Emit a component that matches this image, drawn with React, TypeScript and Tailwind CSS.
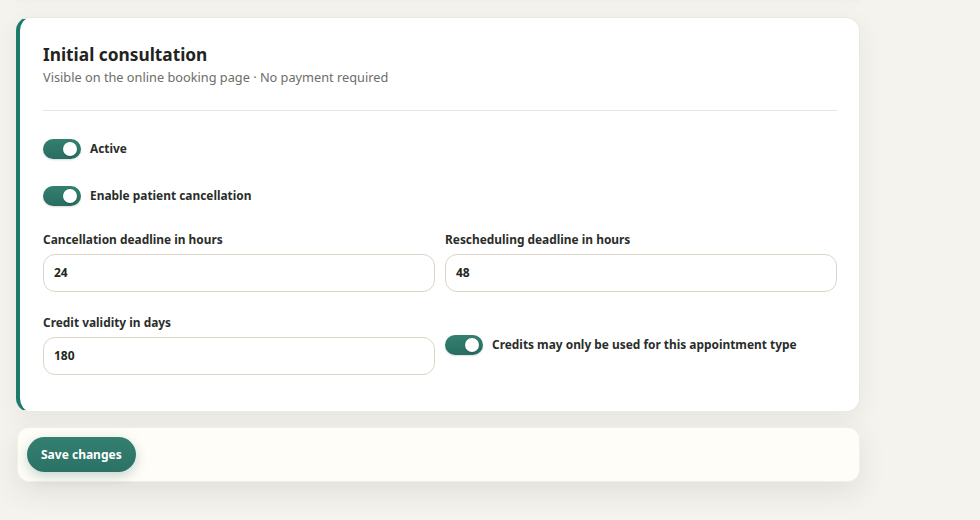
import React from "react";

function Toggle({ on = true }: { on?: boolean }) {
  return (
    <span
      className={`relative inline-flex h-5 w-[38px] shrink-0 items-center rounded-full shadow-[0_1px_2px_rgba(0,0,0,0.15)] ${
        on ? "bg-gradient-to-b from-[#34806f] to-[#286d61]" : "bg-[#d6d3cb]"
      }`}
    >
      <span
        className={`absolute top-[3px] h-[14px] w-[14px] rounded-full bg-white shadow-[0_1px_2px_rgba(0,0,0,0.2)] ${
          on ? "right-[4px]" : "left-[4px]"
        }`}
      />
    </span>
  );
}

function ToggleRow({ label }: { label: string }) {
  return (
    <div className="flex items-center gap-[9px]">
      <Toggle />
      <span className="text-[11.9px] font-bold text-[#2b2d2a]">{label}</span>
    </div>
  );
}

function Field({ label, value }: { label: string; value: string }) {
  return (
    <div className="flex flex-col gap-[7px]">
      <label className="text-[11.9px] leading-4 font-bold text-[#2b2d2a]">{label}</label>
      <div className="flex h-[38px] items-center rounded-xl border border-[#ddd4c7] bg-white px-[10px] text-[12px] font-bold text-[#242622]">
        {value}
      </div>
    </div>
  );
}

export default function App() {
  return (
    <div
      className="min-h-[520px] w-[980px] overflow-hidden bg-[#f4f3ee] pl-4"
      style={{ fontFamily: '"Noto Sans", "Open Sans", sans-serif' }}
    >
      <div className="w-[844px]">
        {/* bottom edge of the previous card */}
        <div className="h-[2px] rounded-b-xl bg-[#f0efea] shadow-[0_2px_10px_rgba(0,0,0,0.05)]" />

        <div className="mt-[15px] rounded-[14px] border border-l-4 border-[#ebe8e1] border-l-[#1b7a6a] bg-white pt-[25px] pr-[22px] pb-[36px] pl-[23px] shadow-[0_8px_24px_rgba(60,55,40,0.07)]">
          <h2 className="text-[17.3px] leading-6 font-bold text-[#1f2421]">Initial consultation</h2>
          <p className="mt-px text-[12.75px] leading-[18px] text-[#6d6e69]">
            Visible on the online booking page · No payment required
          </p>
          <div className="mt-6 h-px bg-[#ebe8e1]" />

          <div className="mt-[28px] flex flex-col gap-[27px]">
            <ToggleRow label="Active" />
            <ToggleRow label="Enable patient cancellation" />
          </div>

          <div className="mt-[25px] grid grid-cols-2 gap-x-[10px] gap-y-[22px]">
            <Field label="Cancellation deadline in hours" value="24" />
            <Field label="Rescheduling deadline in hours" value="48" />
            <Field label="Credit validity in days" value="180" />
            <div className="flex items-center">
              <ToggleRow label="Credits may only be used for this appointment type" />
            </div>
          </div>
        </div>

        <div className="mt-[15px] ml-px rounded-xl border border-[#f1efe8] bg-[#fefdf8] p-[9px] shadow-[0_10px_28px_rgba(60,55,40,0.10)]">
          <button className="h-[35px] rounded-full bg-gradient-to-b from-[#347f70] to-[#2b7264] px-[14px] text-[12px] font-bold text-white shadow-[0_4px_12px_rgba(30,90,80,0.25)]">
            Save changes
          </button>
        </div>
      </div>
    </div>
  );
}
